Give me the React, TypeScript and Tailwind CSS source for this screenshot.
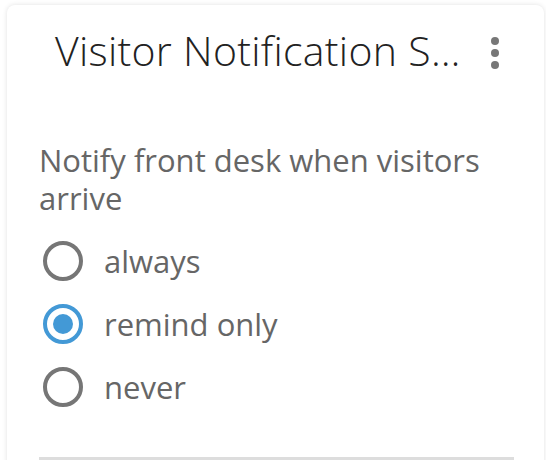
import { useState } from 'react';

const options = ['always', 'remind only', 'never'];

function Radio({ checked }: { checked: boolean }) {
  return checked ? (
    <span className="flex h-[40px] w-[40px] shrink-0 items-center justify-center rounded-full border-4 border-[#4399d6]">
      <span className="h-[20px] w-[20px] rounded-full bg-[#4399d6]" />
    </span>
  ) : (
    <span className="h-[40px] w-[40px] shrink-0 rounded-full border-4 border-[#767676]" />
  );
}

export default function App() {
  const [value, setValue] = useState('remind only');

  return (
    <div className="h-[460px] w-[546px] overflow-hidden bg-white pl-[7px] pt-[5px] font-['Open_Sans',sans-serif]">
      <div className="h-[500px] w-[537px] rounded-lg bg-white shadow-[0_0_5px_rgba(0,0,0,0.12)]">
        {/* Header */}
        <div className="flex items-center pl-[48px] pr-[41px] pt-[17px]">
          <h2 className="min-w-0 flex-1 whitespace-nowrap text-[41px] leading-[56px] font-light tracking-[0.3px] text-[#222]">
            Visitor Notification S…
          </h2>
          <button className="mt-[6px] flex flex-col items-center gap-[4px] px-1">
            <span className="h-[8px] w-[8px] rounded-full bg-[#777]" />
            <span className="h-[8px] w-[8px] rounded-full bg-[#777]" />
            <span className="h-[8px] w-[8px] rounded-full bg-[#777]" />
          </button>
        </div>

        {/* Body */}
        <div className="px-[32px] pt-[63px]">
          <p className="w-[460px] text-[31px] leading-[38px] text-[#666]">
            Notify front desk when visitors arrive
          </p>
          <div className="mt-[24px] flex flex-col gap-[23px]">
            {options.map((opt) => (
              <label
                key={opt}
                className="flex cursor-pointer items-center gap-[21px] pl-[4px]"
                onClick={() => setValue(opt)}
              >
                <Radio checked={value === opt} />
                <span className="text-[31px] leading-[40px] text-[#666]">{opt}</span>
              </label>
            ))}
          </div>
          <div className="mt-[50px] h-[3px] w-[475px] bg-[#ddd]" />
        </div>
      </div>
    </div>
  );
}
